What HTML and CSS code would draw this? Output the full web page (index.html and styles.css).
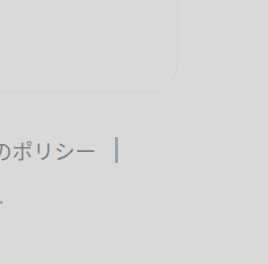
FILE: index.html
```html
<!DOCTYPE html>
<html lang="ja">
<head>
    <meta charset="UTF-8">
    <meta name="viewport" content="width=device-width, initial-scale=1.0">
    <title>フッター</title>
    <link rel="stylesheet" href="styles.css">
</head>
<body>

<div id="page">
    <div class="card"></div>

    <div id="footer">
        <div class="links">
            <span class="link">Cookieのポリシー</span>
            <span class="sep"></span>
        </div>
        <div class="note">サイトマップ.</div>
    </div>
</div>

</body>
</html>
```

FILE: styles.css
```css
body {
    font-family: 'Noto Sans CJK JP', 'Noto Sans', sans-serif;
    margin: 0;
    background-color: #d9d9d9;
    overflow: hidden;
}
#page {
    margin-left: -60px;
}
.card {
    margin-top: -100px;
    width: 236px;
    height: 191px;
    border: 1.5px solid #d1d1d1;
    border-radius: 30px;
}
#footer {
    margin-top: 42px;
    margin-left: 60px;
}
.links {
    display: flex;
    justify-content: flex-end;
    align-items: center;
    gap: 19px;
    width: 300px;
    margin-left: -182px;
    font-size: 21px;
    color: #7f8285;
    white-space: nowrap;
}
.sep {
    width: 3px;
    height: 26px;
    background: #95a3b0;
}
.note {
    width: 200px;
    margin-left: -196px;
    margin-top: 15px;
    text-align: right;
    font-size: 21px;
    color: #8e9cab;
    white-space: nowrap;
    overflow: hidden;
}
```
